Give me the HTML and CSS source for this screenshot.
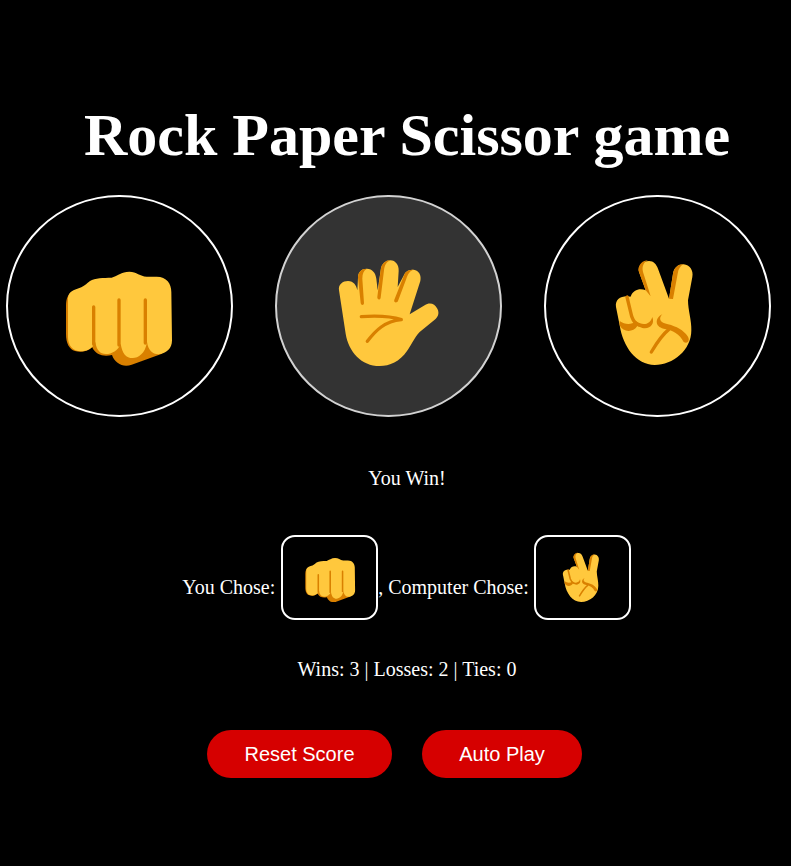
FILE: index.html
```html
<!DOCTYPE html>
<html lang="en">
<head>
<meta charset="utf-8">
<title>Rock Paper Scissor game</title>
<link rel="stylesheet" href="styles.css">
</head>
<body>
<svg class="defs" width="0" height="0" aria-hidden="true">
  <symbol id="rock" viewBox="177 167 360 360">
    <path class="dark" d="M198 345C198 325 204 312 216 304L480 400 486 490 395 523C370 532 345 520 336 494 310 500 288 494 276 470 262 485 240 487 225 482 208 476 198 460 198 430Z"/>
    <path class="skin" d="M204 325C204 308 215 300 232 295 250 290 260 280 270 272 285 262 310 263 335 262 350 258 365 244 388 244 410 244 420 258 440 259L470 259C500 259 514 280 514 305L516 450C516 475 500 488 480 491 462 494 445 484 441 455 436 490 415 503 398 503 378 503 367 490 362 460 355 480 335 491 318 491 300 491 290 480 286 455 280 475 258 483 243 483 218 483 204 465 204 440Z"/>
    <path class="line" d="M281 350V462M357 329V464M436 329V458"/>
  </symbol>
  <symbol id="paper" viewBox="175 167 360 360">
    <path class="skin" d="M208 300C205 282 220 272 235 272 252 272 260 285 263 300L265 262C265 245 275 235 292 235 308 235 318 248 320 265L324 300 333 240C335 220 348 210 362 210 378 210 388 225 387 242L384 290 405 250C412 240 420 238 432 238 448 240 456 255 452 272L420 372 465 345C480 335 495 340 503 355 510 368 505 380 495 388L450 425C435 440 425 465 412 482 390 514 360 527 330 527 275 527 237 485 228 430Z"/>
    <path class="dark" d="M265 262C265 245 275 235 292 235 282 240 278 250 278 265L283 338C283 346 274 346 273 338ZM333 240C335 220 348 210 362 210 350 215 345 225 343 240L333 322C332 330 322 329 323 320ZM405 250C412 240 420 238 432 238 420 242 415 250 410 265L385 332C381 340 371 336 374 328Z"/>
    <path class="line" d="M275 379C320 376 365 378 395 388 345 393 318 420 293 453"/>
  </symbol>
  <symbol id="scissors" viewBox="172 167 360 360">
    <path class="skin" d="M229 350C226 330 240 318 262 318 270 318 272 322 274 316 280 300 300 292 318 300L298 245C294 225 310 212 328 212 342 212 350 222 355 235L388 325 400 250C403 232 415 222 432 222 450 224 462 240 458 260L445 330C445 360 456 390 455 420 455 480 400 524 345 524 290 524 250 470 240 405Z"/>
    <path class="dark" d="M296 240C296 222 310 210 325 210 312 216 306 228 310 245L333 318 318 300ZM400 250C403 232 415 222 432 222 422 226 416 236 414 250L400 326 388 325Z"/>
    <path class="line" d="M262 320L276 378C281 392 286 400 298 404"/>
    <path class="dark" d="M240 392C255 402 272 405 290 393 310 408 332 402 338 380 346 400 332 418 308 413L293 407C280 428 250 426 240 405ZM368 372C345 382 345 410 372 415 400 420 420 430 432 455 445 462 452 450 444 438 432 420 410 408 385 402 362 398 355 385 368 372Z"/>
    <path class="line" d="M387 418C365 435 350 460 335 485"/>
  </symbol>
</svg>

<h1 class="title">Rock Paper Scissor game</h1>

<div class="moves">
  <button class="move"><svg class="move-icon"><use href="#rock"/></svg></button>
  <button class="move move-active"><svg class="move-icon"><use href="#paper"/></svg></button>
  <button class="move"><svg class="move-icon"><use href="#scissors"/></svg></button>
</div>

<p class="line-text result">You Win!</p>

<p class="line-text chosen">You Chose: <span class="choice choice-first"><span class="choice-inner"><svg class="choice-icon"><use href="#rock"/></svg></span></span>, Computer Chose: <span class="choice"><span class="choice-inner"><svg class="choice-icon"><use href="#scissors"/></svg></span></span></p>

<p class="line-text score">Wins: 3 | Losses: 2 | Ties: 0</p>

<div class="actions">
  <button class="action action-reset">Reset Score</button>
  <button class="action action-auto">Auto Play</button>
</div>
</body>
</html>
```

FILE: styles.css
```css
html, body {
  margin: 0;
  padding: 0;
  background: #000;
  color: #fff;
  font-family: "Liberation Serif", "Times New Roman", serif;
}

body {
  height: 866px;
  overflow: hidden;
}

.defs {
  position: absolute;
}

.skin { fill: #ffc83d; }
.dark { fill: #d98000; }
.line {
  fill: none;
  stroke: #d98000;
  stroke-width: 10;
  stroke-linecap: round;
  stroke-linejoin: round;
}

.title {
  margin: 0;
  padding: 99px 0 0 23px;
  height: 96px;
  font-size: 60px;
  line-height: 72px;
  font-weight: 700;
  text-align: center;
}

.moves {
  display: flex;
  gap: 42.5px;
  padding-left: 6px;
}

.move {
  display: flex;
  align-items: center;
  justify-content: center;
  box-sizing: border-box;
  width: 226.5px;
  height: 222px;
  padding: 0;
  border: 2px solid #fff;
  border-radius: 50%;
  background: #000;
}

.move-active {
  background: #333;
  border-color: #d2d2d2;
}

.move-icon {
  width: 120px;
  height: 120px;
  flex: none;
}

.line-text {
  margin: 0;
  padding-left: 23px;
  font-size: 20px;
  line-height: 23px;
  text-align: center;
}

.result {
  margin-top: 50px;
}

.chosen {
  margin-top: 45px;
  line-height: 85px;
}

.choice {
  display: inline-block;
  overflow: hidden;
  vertical-align: -26px;
  margin-right: 1px;
  line-height: 0;
}

.choice-first {
  margin: 0 0 0 1px;
}

.choice-inner {
  display: flex;
  align-items: center;
  justify-content: center;
  box-sizing: border-box;
  width: 97px;
  height: 85px;
  padding-bottom: 7px;
  border: 2px solid #fff;
  border-radius: 14px;
}

.choice-icon {
  width: 56.4px;
  height: 56.4px;
  flex: none;
}

.score {
  margin-top: 28px;
}

.actions {
  display: flex;
  gap: 30px;
  margin-top: 49px;
  padding-left: 207px;
}

.action {
  height: 48px;
  padding: 0;
  border: 0;
  border-radius: 24px;
  background: #d60000;
  color: #fff;
  font-family: "Liberation Sans", Arial, sans-serif;
  font-size: 20px;
}

.action-reset { width: 185px; }
.action-auto { width: 160px; }
```
